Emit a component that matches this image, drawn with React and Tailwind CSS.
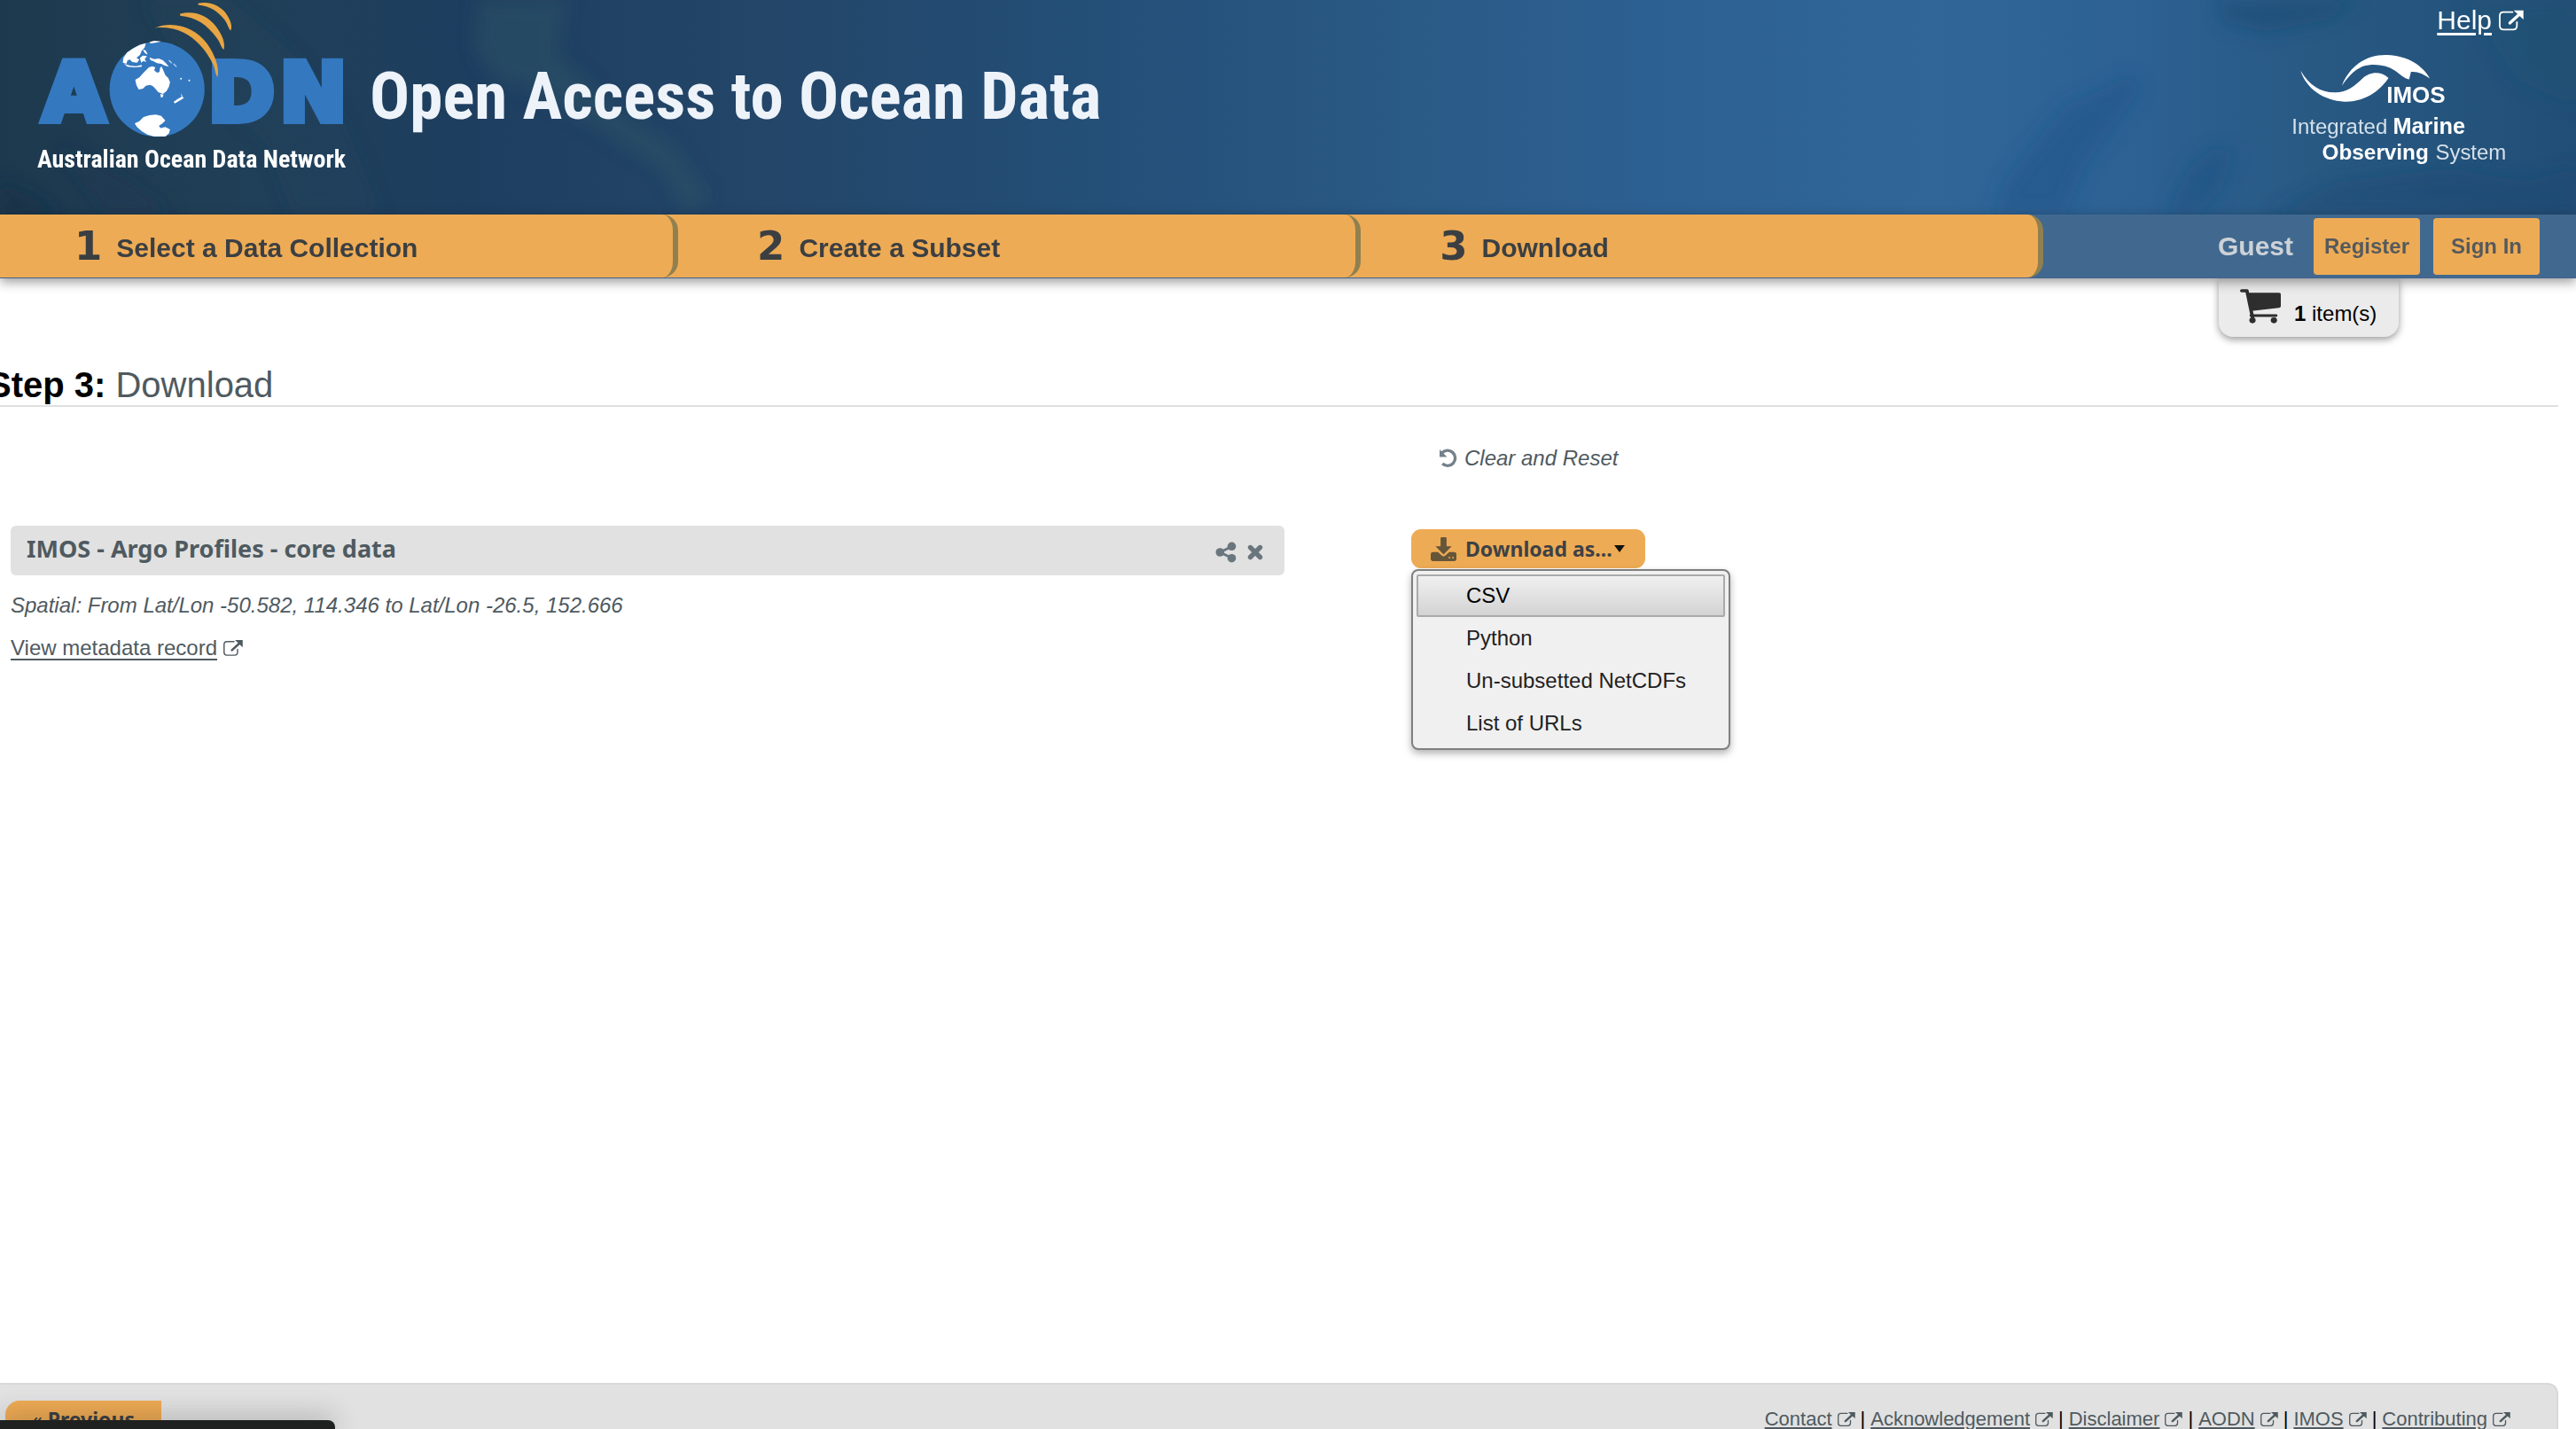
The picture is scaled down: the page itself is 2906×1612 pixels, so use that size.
import React from "react";

const STEPS = [
  { n: 1, label: "Select a Data Collection" },
  { n: 2, label: "Create a Subset" },
  { n: 3, label: "Download" },
];

const FORMATS = ["CSV", "Python", "Un-subsetted NetCDFs", "List of URLs"];

const FOOTER_LINKS = ["Contact", "Acknowledgement", "Disclaimer", "AODN", "IMOS", "Contributing"];

function ExternalIcon({ className }) {
  return (
    <svg viewBox="0 0 84 72" className={className} fill="none" stroke="currentColor" aria-hidden="true">
      <path d="M46 8H16Q3 8 3 21V54Q3 67 16 67H48Q61 67 61 54V42" strokeWidth="5.5" strokeLinecap="round" />
      <path d="M37 45L70 15" strokeWidth="10" strokeLinecap="round" />
      <path d="M50 2H83V33Z" fill="currentColor" stroke="none" />
    </svg>
  );
}

function OceanTexture() {
  return (
    <svg
      viewBox="0 0 2906 242"
      preserveAspectRatio="none"
      className="absolute inset-0 h-full w-full"
      aria-hidden="true"
    >
      <defs>
        <linearGradient id="sea">
          <stop offset="0" stopColor="#1d394e" />
          <stop offset="0.08" stopColor="#203f56" />
          <stop offset="0.18" stopColor="#1e3e60" />
          <stop offset="0.3" stopColor="#234669" />
          <stop offset="0.44" stopColor="#245079" />
          <stop offset="0.55" stopColor="#2a5a86" />
          <stop offset="0.64" stopColor="#2d6092" />
          <stop offset="0.75" stopColor="#306698" />
          <stop offset="0.83" stopColor="#2d6193" />
          <stop offset="0.9" stopColor="#285983" />
          <stop offset="1" stopColor="#214e76" />
        </linearGradient>
        <filter id="soft" x="-20%" y="-20%" width="140%" height="140%">
          <feGaussianBlur stdDeviation="10" />
        </filter>
      </defs>
      <rect width="2906" height="242" fill="url(#sea)" />
      <g filter="url(#soft)">
        <path d="M540 0L640 0L628 60L690 120L760 165L800 222L775 242L745 190L690 155L600 100L560 90L535 55Z" fill="#2c5c66" opacity="0.38" />
        <path d="M160 0L260 0L330 60L390 140L430 242L330 242L300 160L210 80Z" fill="#28505f" opacity="0.18" />
        <path d="M0 205L40 225L70 242H0Z" fill="#132b45" opacity="0.6" />
        <path d="M60 160L140 200L200 242H120Z" fill="#173550" opacity="0.25" />
        <path d="M2250 242L2262 205L2285 175L2330 120L2375 100L2400 85L2415 100L2385 140L2350 190L2330 242Z" fill="#1f5084" opacity="0.4" />
        <path d="M2500 0H2660L2630 20L2560 36L2510 25Z" fill="#1a4672" opacity="0.5" />
        <path d="M2445 242L2470 190L2500 165L2520 175L2505 215L2480 242Z" fill="#1c4d80" opacity="0.45" />
        <path d="M2560 242L2640 205L2760 190L2850 205L2906 190V242Z" fill="#1b456e" opacity="0.4" />
        <path d="M2780 0H2906V120L2840 90Z" fill="#1f5274" opacity="0.3" />
      </g>
    </svg>
  );
}

function AodnLogo() {
  return (
    <svg viewBox="60 0 1060 600" className="h-[200px] w-[353px] shrink-0" role="img" aria-label="AODN">
      <g
        fill="#3478bf"
        stroke="#3478bf"
        strokeWidth="24"
        fontFamily='"DejaVu Sans", "Liberation Sans", sans-serif'
        fontWeight="700"
        fontSize="272"
      >
        <text x="190" y="409" textAnchor="middle">A</text>
        <text x="758" y="409" textAnchor="middle">D</text>
        <text x="1001" y="409" textAnchor="middle">N</text>
      </g>
      <circle cx="472" cy="302" r="161" fill="#3478bf" />
      <g fill="#fff">
        <path d="M398 270L412 262L424 248L436 236L444 228L456 224L466 228L462 238L472 246L480 244L482 230L487 224L494 240L500 254L510 264L516 278L512 294L504 308L492 318L476 312L468 302L458 292L448 287L434 290L424 300L410 303L402 288Z" />
        <path d="M483 318L494 320L490 330L485 329Z" />
        <path d="M356 212L358 196L370 178L390 164L412 152L434 146L430 160L420 172L414 186L402 196L412 202L404 212L388 210L380 202L372 204L368 216Z" />
        <path d="M424 166L434 172L440 184L434 182L428 176Z" />
        <path d="M414 196L424 188L438 190L430 200L436 210L426 206L418 212Z" />
        <path d="M360 216L380 222L400 224L420 220L420 226L396 228L372 226Z" />
        <path d="M446 194L462 200L478 198L492 204L504 216L512 226L498 222L486 216L472 214L458 206L450 204Z" />
        <path d="M446 142L462 138L486 140L470 144L450 147Z" />
        <path d="M396 418L412 410L426 396L446 390L468 388L486 392L500 408L490 418L478 426L484 434L500 430L516 438L512 452L500 462L482 462L462 462L440 456L420 444L404 430Z" />
        <path d="M528 344L544 334L558 326L562 332L546 342L532 350Z" />
        <path d="M554 316L558 326L554 326Z" />
        <circle cx="553" cy="266" r="3" />
        <circle cx="581" cy="272" r="3" />
      </g>
      <path d="M512 204L522 214M528 216L538 226" stroke="#b9d2ec" strokeWidth="4" />
      <g fill="#e7a544">
        <path d="M464 94C530 68 602 94 642 148C668 186 684 226 677 260C670 256 670 236 662 218C638 168 602 130 562 110C530 95 496 91 464 94Z" />
        <path d="M550 46C602 34 644 54 672 90C694 120 704 146 698 168C688 160 688 146 674 128C642 84 604 58 550 53Z" />
        <path d="M611 11C652 2 692 22 710 52C724 74 727 92 721 103C712 94 712 82 700 66C676 36 650 20 611 16Z" />
      </g>
      <text
        x="66"
        y="566"
        fill="#fff"
        fontFamily='"Roboto Condensed", "Open Sans Condensed", Roboto, sans-serif'
        fontWeight="700"
        fontSize="84"
      >
        Australian Ocean Data Network
      </text>
    </svg>
  );
}

function ImosLogo() {
  return (
    <svg viewBox="45 180 730 390" className="h-[130px] w-[243px]" role="img" aria-label="IMOS">
      <g fill="#fff">
        <path d="M73 239C104 290 140 312 188 313C230 314 256 290 282 266C304 246 340 236 371 264C350 296 300 346 222 344C150 340 92 300 73 239Z" />
        <path d="M213 290C240 222 296 184 366 186C436 188 486 222 511 265C490 250 466 240 447 243L441 268C424 266 410 250 392 238C360 218 320 214 284 224C252 238 232 262 213 290Z" />
      </g>
      <g fill="#fff" fontFamily='"Liberation Sans", Arial, sans-serif'>
        <text x="364" y="347" fontSize="78" fontWeight="700">IMOS</text>
        <text x="43" y="454" fontSize="72" fill="#d5e0ea">Integrated</text>
        <text x="386" y="454" fontSize="76" fontWeight="700">Marine</text>
        <text x="146" y="540" fontSize="73" fontWeight="700">Observing</text>
        <text x="530" y="540" fontSize="72" fill="#d5e0ea">System</text>
      </g>
    </svg>
  );
}

function CartIcon() {
  return (
    <svg viewBox="0 0 118 118" className="h-[39px] w-[46px]" preserveAspectRatio="none" aria-hidden="true">
      <path d="M5 6H20L36 96" fill="none" stroke="#2e2e2e" strokeWidth="10" strokeLinecap="round" strokeLinejoin="round" />
      <path d="M24 13H113Q118 13 118 18V58Q118 63 113 64L34 75Z" fill="#2e2e2e" />
      <path d="M32 91H104" stroke="#2e2e2e" strokeWidth="9" strokeLinecap="round" />
      <ellipse cx="36" cy="107" rx="9" ry="10" fill="#2e2e2e" />
      <ellipse cx="98" cy="107" rx="9" ry="10" fill="#2e2e2e" />
    </svg>
  );
}

function ResetIcon() {
  return (
    <svg viewBox="0 0 22 22" className="h-[22px] w-[22px]" aria-hidden="true">
      <path d="M3.6 5A8.6 8.6 0 1 1 4.2 17.1" fill="none" stroke="#74818a" strokeWidth="3.4" />
      <path d="M1 1V9.5H9.5Z" fill="#74818a" />
    </svg>
  );
}

function ShareIcon() {
  return (
    <svg viewBox="0 0 24 24" className="h-6 w-6" aria-hidden="true">
      <path d="M18.5 5.5L5.5 12L18.5 18.5" fill="none" stroke="#6a767e" strokeWidth="3" />
      <g fill="#6a767e">
        <circle cx="18.5" cy="5.3" r="4.8" />
        <circle cx="5.3" cy="12" r="4.8" />
        <circle cx="18.5" cy="18.7" r="4.8" />
      </g>
    </svg>
  );
}

function CloseIcon() {
  return (
    <svg viewBox="0 0 18 18" className="h-[18px] w-[18px]" aria-hidden="true">
      <path d="M3.5 3.5L14.5 14.5M14.5 3.5L3.5 14.5" stroke="#6a767e" strokeWidth="5.4" strokeLinecap="round" />
    </svg>
  );
}

function DownloadIcon() {
  return (
    <svg viewBox="0 0 86 80" className="h-[27px] w-[29px]" fill="#655539" aria-hidden="true">
      <path d="M33 4Q33 0 37 0H49Q53 0 53 4V30H70L43 58L16 30H33Z" />
      <path
        fillRule="evenodd"
        d="M8 50H24L38 62Q43 66 48 62L62 50H78Q86 50 86 58V72Q86 80 78 80H8Q0 80 0 72V58Q0 50 8 50ZM60 66V71H65V66ZM72 66V71H77V66Z"
      />
    </svg>
  );
}

export default function App() {
  return (
    <div className="flex h-screen flex-col overflow-hidden bg-white font-['Liberation_Sans',Arial,sans-serif] text-2xl leading-7 text-[#4f5a60]">
      <header className="relative flex h-[242px] shrink-0 items-start justify-between overflow-hidden">
        <OceanTexture />
        <div className="relative flex items-start pl-10">
          <AodnLogo />
          <h1 className="ml-6 pt-[58px] font-['Roboto_Condensed','Open_Sans_Condensed',Roboto,sans-serif] text-[75px] leading-[100px] font-bold whitespace-nowrap text-[#eef3fa]">
            Open Access to Ocean Data
          </h1>
        </div>
        <div className="relative flex flex-col items-end pr-[59px] text-white">
          <a href="#help" className="flex items-center gap-2 pt-1.5 text-[30px] leading-[34px]">
            <span className="underline decoration-[3px] underline-offset-4">Help</span>
            <ExternalIcon className="h-6 w-7" />
          </a>
          <div className="mt-5 mr-[18px]">
            <ImosLogo />
          </div>
        </div>
      </header>

      <nav className="relative z-10 flex h-[72px] shrink-0 items-center justify-between border-b border-[#41648f] bg-[#41698f] shadow-[0_4px_12px_rgba(0,0,0,0.4)]">
        <ol className="-ml-[5px] flex h-full w-[79.5%] text-[#3b3f42]">
          {STEPS.map((s) => (
            <li key={s.n} className="flex-1 bg-[#eeab55] last:bg-transparent">
              <a
                href={`#step${s.n}`}
                className="flex h-full items-center gap-4 rounded-r-[18px] border-r-[6px] border-[#91804f] bg-[#eeab55] pl-[89px]"
              >
                <span className="font-['DejaVu_Sans',sans-serif] text-[45px] leading-[54px] font-bold">
                  {s.n}
                </span>
                <span className="pt-1 text-3xl font-bold">{s.label}</span>
              </a>
            </li>
          ))}
        </ol>
        <div className="flex items-center gap-[15px] pr-[41px] font-bold">
          <span className="mr-2 text-3xl text-[#cdd2d8]">Guest</span>
          <button type="button" className="h-16 w-[120px] rounded bg-[#eeab55] text-[#555a5c]">
            Register
          </button>
          <button type="button" className="h-16 w-[120px] rounded bg-[#eeab55] text-[#555a5c]">
            Sign In
          </button>
        </div>
      </nav>

      <main className="flex flex-1 flex-col pr-5 pl-3">
        <div className="flex justify-end pr-[180px]">
          <a
            href="#cart"
            className="flex h-[66px] w-[203px] items-start gap-[15px] rounded-b-2xl bg-[#ebebeb] pt-3 pl-6 text-black shadow-[0_3px_9px_rgba(0,0,0,0.4)]"
          >
            <CartIcon />
            <span className="pt-3.5">
              <b>1</b> item(s)
            </span>
          </a>
        </div>

        <h2 className="mt-[31px] -ml-[26px] border-b-2 border-[#e0e0e0] text-[40px] leading-[46px]">
          <b className="text-black">Step 3:</b> Download
        </h2>

        <div className="mt-11 flex">
          <section className="w-1/2 pt-[90px]">
            <div className="flex h-14 items-center justify-between rounded-md bg-[#e1e1e1] pr-6 pl-[18px]">
              <h3 className="pb-1 font-['Noto_Sans',sans-serif] text-[27px] leading-9 font-bold">
                IMOS - Argo Profiles - core data
              </h3>
              <div className="flex items-center gap-3 pt-1">
                <button type="button" aria-label="Share">
                  <ShareIcon />
                </button>
                <button type="button" aria-label="Remove">
                  <CloseIcon />
                </button>
              </div>
            </div>
            <p className="mt-5 italic">Spatial: From Lat/Lon -50.582, 114.346 to Lat/Lon -26.5, 152.666</p>
            <a href="#metadata" className="mt-5 inline-flex items-center gap-[7px]">
              <span className="underline decoration-2 underline-offset-4">View metadata record</span>
              <ExternalIcon className="h-5 w-[22px]" />
            </a>
          </section>

          <section className="ml-[143px]">
            <button type="button" className="ml-[31px] flex items-center gap-[7px] italic">
              <ResetIcon />
              Clear and Reset
            </button>
            <div className="relative mt-[66px]">
              <button
                type="button"
                aria-expanded="true"
                className="flex h-11 w-[264px] items-center rounded-[11px] bg-[#eeab55] pl-[22px] font-['Noto_Sans',sans-serif] text-[23px] font-bold text-[#3d4145]"
              >
                <DownloadIcon />
                <span className="ml-2.5">Download as...</span>
                <svg viewBox="0 0 12 8" className="ml-0.5 h-2 w-3" aria-hidden="true">
                  <path d="M0 0H12L6 8Z" fill="#111" />
                </svg>
              </button>
              <ul className="absolute top-[45px] left-0 w-[360px] rounded-lg border-2 border-[#7f7f7f] bg-[#f0f0f0] p-1 shadow-[0_4px_8px_rgba(0,0,0,0.3)]">
                {FORMATS.map((f, i) => (
                  <li key={f}>
                    <button
                      type="button"
                      className={
                        i === 0
                          ? "h-12 w-full rounded-xs border-2 border-[#aaaaaa] bg-linear-to-b from-[#f0f0f0] to-[#d3d3d3] pl-[54px] text-left text-black"
                          : "h-12 w-full border-2 border-transparent pl-[54px] text-left text-[#222222]"
                      }
                    >
                      {f}
                    </button>
                  </li>
                ))}
              </ul>
            </div>
          </section>
        </div>
      </main>

      <footer className="mr-5 flex h-[52px] shrink-0 items-start justify-between rounded-tr-xl border-t-2 border-r-2 border-[#d9d9d9] bg-[#e1e1e1] pr-[52px] pl-1.5">
        <button
          type="button"
          className="mt-[18px] flex h-11 w-44 items-center justify-center gap-1.5 rounded-tl-2xl bg-[#eeab55] pb-0.5 font-['Noto_Sans',sans-serif] text-[23px] font-bold text-[#3d4145]"
        >
          <span className="font-normal">«</span> Previous
        </button>
        <div className="mt-[26px] flex gap-1.5 text-[22px] leading-[26px]">
          {FOOTER_LINKS.map((l, i) => (
            <React.Fragment key={l}>
              {i > 0 && <span className="text-black">|</span>}
              <a href={`#${l}`} className="flex items-center gap-1.5">
                <span className="underline decoration-2 underline-offset-2">{l}</span>
                <ExternalIcon className="h-[18px] w-5" />
              </a>
            </React.Fragment>
          ))}
        </div>
      </footer>

      <div className="fixed bottom-0 left-0 z-20 h-2.5 w-[378px] rounded-tr-lg bg-[#1f2120] shadow-[0_0_30px_rgba(0,0,0,0.45)]" />
    </div>
  );
}
